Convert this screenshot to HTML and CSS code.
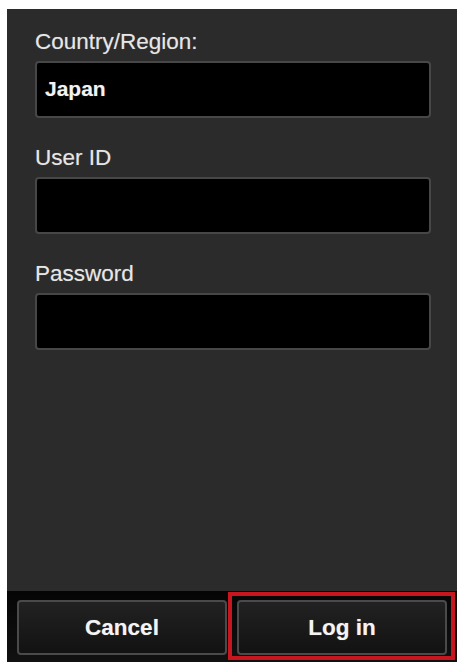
FILE: index.html
```html
<!DOCTYPE html>
<html lang="en">
<head>
<meta charset="utf-8">
<title>Log in</title>
<link rel="stylesheet" href="styles.css">
</head>
<body>
<div class="panel">
  <form class="fields">
    <div class="field">
      <label class="label">Country/Region:</label>
      <div class="input"><span class="value">Japan</span></div>
    </div>
    <div class="field">
      <label class="label">User ID</label>
      <div class="input"></div>
    </div>
    <div class="field">
      <label class="label">Password</label>
      <div class="input"></div>
    </div>
  </form>
  <div class="bar">
    <button class="btn" type="button">Cancel</button>
    <button class="btn" type="button">Log in</button>
    <div class="highlight"></div>
  </div>
</div>
</body>
</html>
```
FILE: styles.css
```css
html, body {
  margin: 0;
  padding: 0;
  background: #ffffff;
  width: 459px;
  height: 662px;
  overflow: hidden;
}

body {
  font-family: "Liberation Sans", Arial, sans-serif;
}

.panel {
  margin: 9px 0 0 7px;
  width: 450px;
  height: 653px;
  background: #2b2b2b;
  display: flex;
  flex-direction: column;
}

.fields {
  flex: 1;
  display: flex;
  flex-direction: column;
  gap: 27px;
  padding: 20px 26px 0 28px;
  margin: 0;
}

.field {
  display: flex;
  flex-direction: column;
  gap: 6px;
}

.label {
  color: #e6e6e6;
  font-size: 22.5px;
  line-height: 26px;
  text-shadow: 0 0 1px rgba(255,255,255,0.35);
}

.input {
  height: 57px;
  box-sizing: border-box;
  background: #000000;
  border: 2px solid #474747;
  border-radius: 4px;
  display: flex;
  align-items: center;
  padding: 0 8px;
}

.value {
  color: #f2f2f2;
  font-weight: bold;
  font-size: 21px;
  margin-top: -2px;
  text-shadow: 0 0 1px rgba(255,255,255,0.35);
}

.bar {
  position: relative;
  height: 71px;
  box-sizing: border-box;
  padding: 9px 10px 7px 10px;
  background: linear-gradient(#050505, #111111);
  display: flex;
  gap: 10px;
}

.btn {
  flex: 1;
  height: 55px;
  box-sizing: border-box;
  background: linear-gradient(#222222, #121212);
  border: 2px solid #4a4a4a;
  border-radius: 4px;
  color: #f4f4f4;
  font-family: "Liberation Sans", Arial, sans-serif;
  font-weight: bold;
  font-size: 22.5px;
  text-shadow: 0 0 1px rgba(255,255,255,0.4);
  padding: 0;
}

.highlight {
  position: absolute;
  left: 221px;
  top: 1px;
  width: 227px;
  height: 68px;
  box-sizing: border-box;
  border: 4px solid #c8161e;
  pointer-events: none;
}
```
